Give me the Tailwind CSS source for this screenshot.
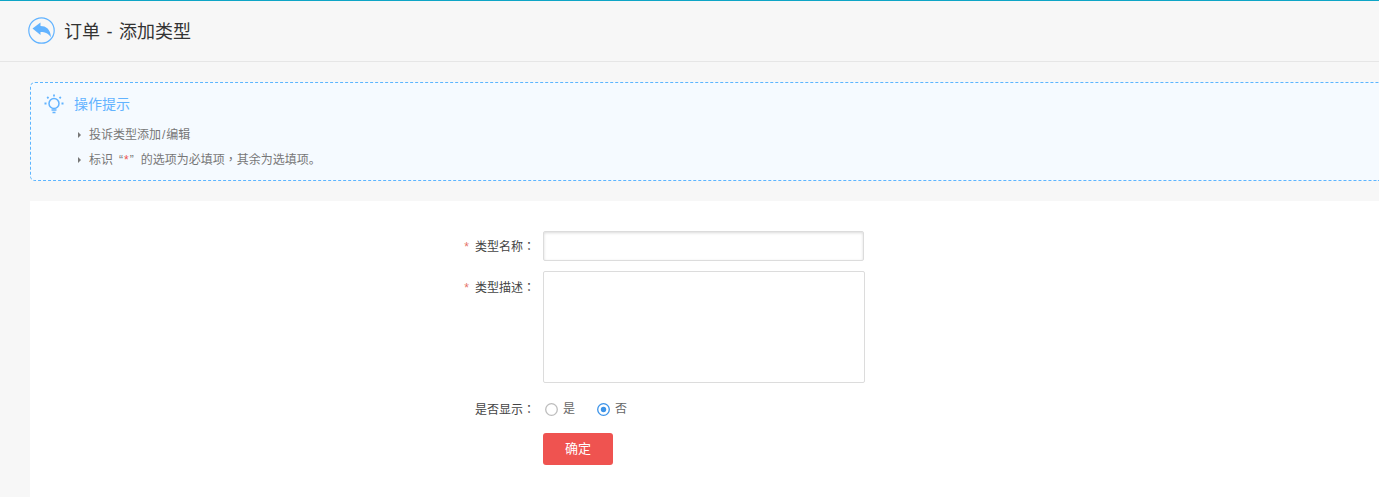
<!DOCTYPE html>
<html lang="zh-CN">
<head>
  <meta charset="UTF-8" />
  <title>订单 - 添加类型</title>
  <script src="https://cdn.jsdelivr.net/npm/@tailwindcss/browser@4"></script>
</head>
<body class="bg-[#f7f7f7] text-[#333] font-['Liberation_Sans','Noto_Sans_CJK_SC',sans-serif] text-xs overflow-hidden">
<div class="h-[497px] overflow-hidden">
  <header class="h-[62px] border-t border-t-[#0ea5c6] border-b border-b-[#e6e6e6] flex items-center pl-[28px] pb-[1px]">
    <svg class="w-[27px] h-[27px] text-[#62b3ff]" viewBox="0 0 27 27" fill="none">
      <circle cx="13.5" cy="13.5" r="12.7" stroke="currentColor" stroke-width="1.2"/>
      <path d="M4.5 11.5 L12.5 5.5 V9 C18 9 22.5 12 23 20.5 C20.5 16.5 17.5 15 12.5 15 V18 Z" fill="currentColor"/>
    </svg>
    <h1 class="ml-[9px] pt-[2px] text-lg font-normal text-[#333] [word-spacing:1.5px]">订单 - 添加类型</h1>
  </header>

  <div class="ml-[30px] mt-[20px] h-[99px] rounded-[5px] border border-dashed border-[#5cb5ff] bg-[#f5faff] border-r-0 rounded-r-none">
    <div class="flex items-center h-[41px] pl-[13px]">
      <svg class="w-[20px] h-[20px] text-[#62b3ff]" viewBox="0 0 20 20" fill="none" stroke="currentColor" stroke-width="1.5">
        <circle cx="10" cy="9.5" r="5"/>
        <path d="M7.5 16h5M8.5 18.5h3" />
        <path stroke-width="1.8" d="M10 0.5v2M3.2 3l1.3 1.3M16.8 3l-1.3 1.3M0.5 9.5h2M17.5 9.5h2"/>
      </svg>
      <span class="ml-[10px] text-sm text-[#62b3ff]">操作提示</span>
    </div>
    <ul class="text-[#777] pl-[47px]">
      <li class="flex items-center h-[25px] mt-[-2px]">
        <span class="w-0 h-0 border-y-[3px] border-y-transparent border-l-[3px] border-l-[#777]"></span>
        <span class="ml-[8px]">投诉类型添加<span class="mx-[1px]">/</span>编辑</span>
      </li>
      <li class="flex items-center h-[25px]">
        <span class="w-0 h-0 border-y-[3px] border-y-transparent border-l-[3px] border-l-[#777]"></span>
        <span class="ml-[8px]">标识<span class="ml-[6px]">“</span><span class="mx-[1px] text-[#ef5350]">*</span><span class="mr-[7px]">”</span>的选项为必填项<span lang="zh-TW" class="font-['Noto_Sans_CJK_TC']">，</span>其余为选填项<span class="font-['Noto_Sans_CJK_SC']">。</span></span>
      </li>
    </ul>
  </div>

  <main class="ml-[30px] mt-[20px] bg-white h-[296px] pt-[30px]">
    <form>
      <div class="flex items-center h-[30px]">
        <label class="w-[513px] pr-[8px] pt-[1px] text-right text-[#444]"><span class="text-[#e57368] mr-[6px]">*</span>类型名称<span lang="zh-TW" class="font-['Noto_Sans_CJK_TC']">：</span></label>
        <input type="text" class="w-[321px] h-[30px] border border-[#dcdcdc] rounded-[2px] shadow-[inset_0_1px_3px_rgba(0,0,0,0.15)] bg-white" />
      </div>
      <div class="flex mt-[10px]">
        <label class="w-[513px] pr-[8px] pt-[8px] text-right text-[#444]"><span class="text-[#e57368] mr-[6px]">*</span>类型描述<span lang="zh-TW" class="font-['Noto_Sans_CJK_TC']">：</span></label>
        <textarea class="w-[322px] h-[112px] border border-[#dcdcdc] rounded-[2px] bg-white resize-none"></textarea>
      </div>
      <div class="flex items-center h-[20px] mt-[16px]">
        <label class="w-[513px] pr-[8px] text-right text-[#444]">是否显示<span lang="zh-TW" class="font-['Noto_Sans_CJK_TC']">：</span></label>
        <svg class="ml-[2px] w-[13px] h-[13px]" viewBox="0 0 13 13" fill="#fff"><circle cx="6.5" cy="6.5" r="5.8" stroke="#bdbdbd" stroke-width="1.3"/></svg>
        <span class="ml-[5px] text-[#666]">是</span>
        <svg class="ml-[22px] w-[13px] h-[13px]" viewBox="0 0 13 13" fill="#fff"><circle cx="6.5" cy="6.5" r="5.8" stroke="#3c93e8" stroke-width="1.3"/><circle cx="6.5" cy="6.5" r="2.7" fill="#3c93e8"/></svg>
        <span class="ml-[5px] text-[#666]">否</span>
      </div>
      <div class="pl-[513px] mt-[14px]">
        <button type="button" class="w-[70px] h-[32px] bg-[#ef5350] text-white text-[13px] rounded-[3px]">确定</button>
      </div>
    </form>
  </main>
</div>
</body>
</html>
